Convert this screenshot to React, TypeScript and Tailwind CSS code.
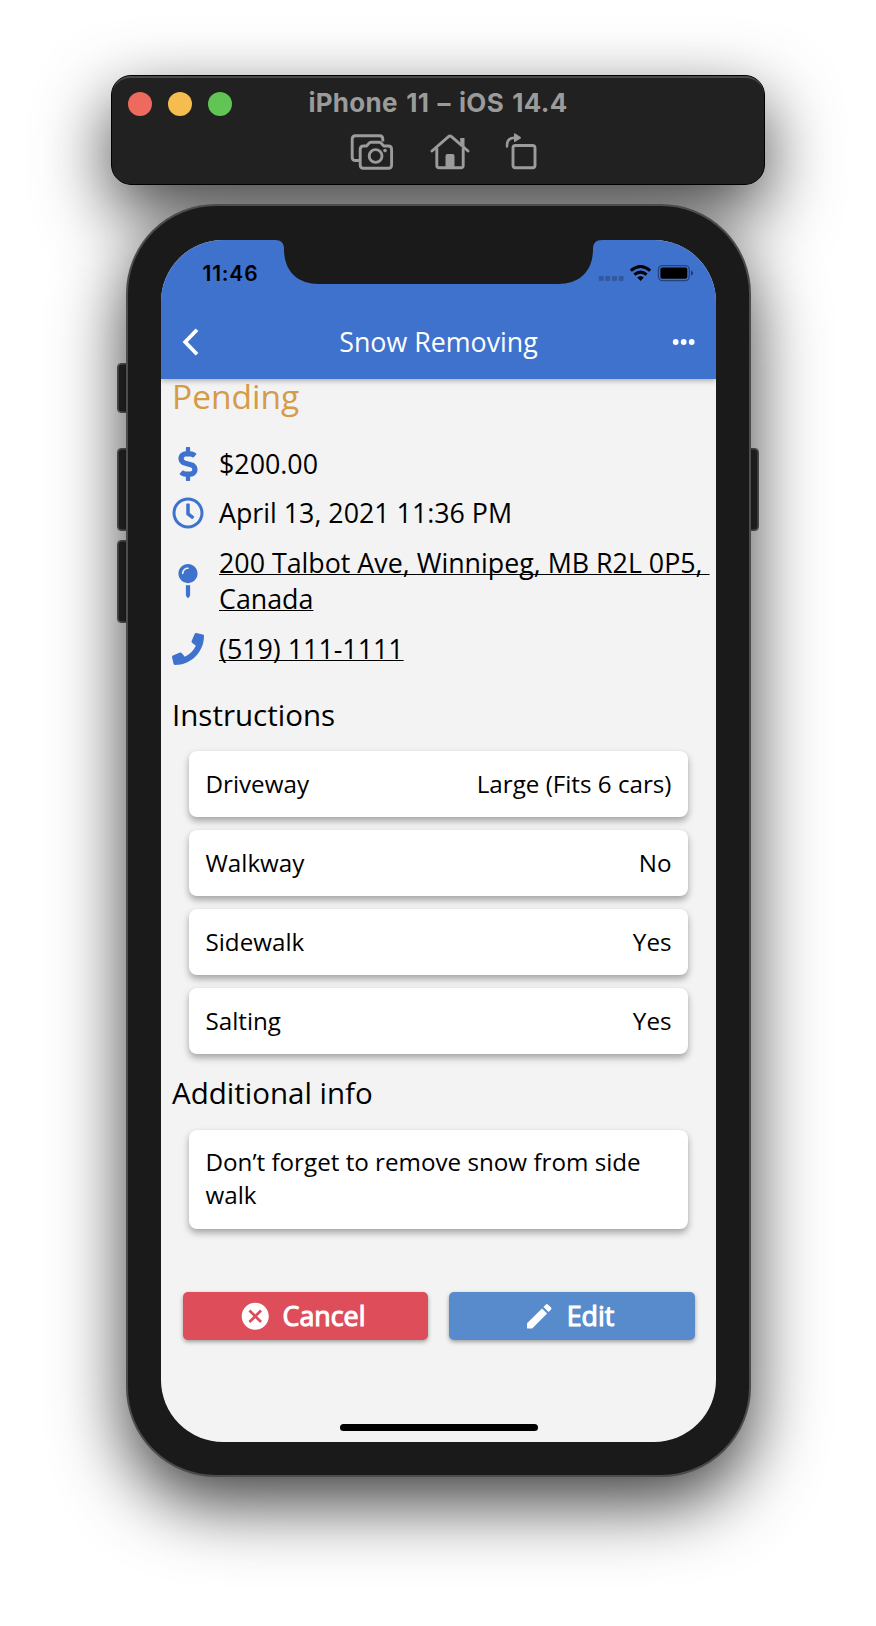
import React from "react";
import type { ReactNode } from "react";
import { FaDollarSign, FaMapPin, FaPhone, FaRegClock } from "react-icons/fa";
import { MdCancel, MdEdit } from "react-icons/md";

const instructions = [
  { label: "Driveway", value: "Large (Fits 6 cars)" },
  { label: "Walkway", value: "No" },
  { label: "Sidewalk", value: "Yes" },
  { label: "Salting", value: "Yes" },
];

function Toolbar() {
  return (
    <div className="relative mx-auto h-[110px] w-[654px]">
      <div className="absolute inset-0 rounded-[20px] shadow-[0_26px_70px_rgba(0,0,0,0.74)]" />
      <div className="relative z-20 h-full rounded-[20px] border border-black bg-[#212121]">
        <div className="absolute inset-0 rounded-[19px] border-t-2 border-[#4a4a4a]" />
        <div className="grid h-[54px] grid-cols-[1fr_auto_1fr] items-center">
          <div className="flex gap-4 pl-4 pt-[2px]">
            <span className="size-6 rounded-full bg-[#ee6a5f]" />
            <span className="size-6 rounded-full bg-[#f5bd4f]" />
            <span className="size-6 rounded-full bg-[#61c454]" />
          </div>
          <div className="font-['Inter',sans-serif] text-[26px] font-bold leading-none tracking-[0.3px] text-[#9b9b9b] [word-spacing:1.8px]">
            iPhone 11 – iOS 14.4
          </div>
        </div>
        <div className="flex pl-[238px] pt-[2px]" aria-hidden="true">
          <svg className="h-[38px] w-[44px]" viewBox="0 0 44 38" fill="none" stroke="#9b9b9b" strokeWidth="2.9" strokeLinejoin="round">
            <path d="M9 28.500H5.500Q2.200 28.500 2.200 25.200V7Q2.200 3.700 5.500 3.700H29.500Q32.800 3.700 32.800 7V9.500" />
            <path d="M10.200 17.500Q10.200 14 13.500 14H16.500L19.300 11Q20.100 10.200 21.300 10.200H29Q30.200 10.200 31 11L33.800 14H38.300Q41.600 14 41.600 17.500V33Q41.600 36.300 38.300 36.300H13.500Q10.200 36.300 10.200 33Z" />
            <circle cx="25.600" cy="24" r="6.400" />
            <circle cx="35" cy="18.600" r="1.800" fill="#9b9b9b" stroke="none" />
          </svg>
          <svg className="ml-[36px] h-[38px] w-[40px]" viewBox="0 0 40 38" fill="none" stroke="#9b9b9b" strokeWidth="2.900" strokeLinejoin="round">
            <path d="M2 19L18.500 4.700Q20 3.400 21.500 4.700L38 19" strokeLinecap="round" />
            <path d="M6.800 16V33.500Q6.800 35.800 9.300 35.800H30.700Q33.200 35.800 33.200 33.500V16" />
            <path d="M15.500 36V24Q15.500 22 17.500 22H22.500Q24.500 22 24.500 24V36Z" fill="#9b9b9b" stroke="none" />
            <path d="M30.200 6H34.500V15L30.200 11Z" fill="#9b9b9b" stroke="none" />
          </svg>
          <svg className="ml-[34.5px] h-[38px] w-[34px]" viewBox="0 0 34 38" fill="none" stroke="#9b9b9b" strokeWidth="2.900">
            <rect x="8" y="13.500" width="22" height="22.300" rx="2.500" />
            <path d="M2 14.500V13.500Q2 5.700 9.500 5.700" strokeWidth="2.400" strokeLinecap="round" />
            <path d="M9 2.200Q9 0.900 10.200 1.600L15.600 5Q16.400 5.700 15.600 6.400L10.200 9.800Q9 10.500 9 9.200Z" fill="#9b9b9b" stroke="none" />
          </svg>
        </div>
      </div>
    </div>
  );
}

function StatusBar() {
  return (
    <div className="relative h-[66px]">
      <svg className="absolute left-[114px] top-0 h-[45px] w-[327px]" viewBox="0 0 327 45" fill="#1a1a1a">
        <path d="M0 0C6 0 9 3 9 9C9 31 22 44 44 44H283C305 44 318 31 318 9C318 3 321 0 327 0Z" />
      </svg>
      <div className="flex items-start justify-between pl-[41.5px] pr-[21px] pt-[22px]">
        <span className="font-['Inter',sans-serif] text-[21px] font-semibold leading-[23px] tracking-[0.8px] text-black">11:46</span>
        <svg className="mt-[2px] h-[20px] w-[97px]" viewBox="0 0 97 20">
          <g fill="#000" fillOpacity="0.22">
            <rect x="0.700" y="12" width="5" height="5" rx="1" />
            <rect x="7.300" y="12" width="5" height="5" rx="1" />
            <rect x="14" y="12" width="5" height="5" rx="1" />
            <rect x="20.700" y="12" width="5" height="5" rx="1" />
          </g>
          <g fill="none" stroke="#000" strokeWidth="3">
            <path d="M32.800 6.600Q42.500 -1.600 52.200 6.600" />
            <path d="M36.400 10.600Q42.500 5.600 48.600 10.600" />
          </g>
          <path d="M39.200 13.600Q42.500 11 45.800 13.600L42.500 17Z" />
          <rect x="60.400" y="1.600" width="30.900" height="15" rx="4" fill="none" stroke="#000" strokeOpacity="0.4" strokeWidth="1.300" />
          <rect x="62.400" y="3.400" width="26.900" height="11.400" rx="2" />
          <path d="M93 6.500Q95.200 7.500 95.200 9.100Q95.200 10.700 93 11.700Z" fillOpacity="0.5" />
        </svg>
      </div>
    </div>
  );
}

function Header() {
  return (
    <header className="relative z-10 h-[139px] shrink-0 bg-[#3f72cd] shadow-[0_2px_5px_rgba(0,0,0,0.28)]">
      <StatusBar />
      <div className="grid h-[72px] grid-cols-[1fr_auto_1fr] items-center px-[21px]">
        <svg className="h-[28px] w-[18px]" viewBox="0 0 18 28" fill="none" stroke="#fff" strokeWidth="3.800">
          <path d="M15 1.800L3.200 14L15 26.200" />
        </svg>
        <h1 className="text-[26.8px] leading-[36px] text-white">Snow Removing</h1>
        <svg className="h-[8px] w-[23px] justify-self-end" viewBox="0 0 23 8" fill="#fff">
          <circle cx="3.700" cy="4" r="2.900" />
          <circle cx="11.700" cy="4" r="2.900" />
          <circle cx="19.700" cy="4" r="2.900" />
        </svg>
      </div>
    </header>
  );
}

function Detail({ icon, children, link = false }: { icon: ReactNode; children: ReactNode; link?: boolean }) {
  return (
    <div className="flex items-center gap-[14px]">
      <span className="flex w-[33px] shrink-0 justify-center pr-px text-[34px] leading-none text-[#3f72cd]">{icon}</span>
      {link ? (
        <a className="whitespace-pre underline decoration-[1.4px] underline-offset-[1px] [text-decoration-skip-ink:none]">{children}</a>
      ) : (
        <span>{children}</span>
      )}
    </div>
  );
}

function Card({ children }: { children: ReactNode }) {
  return (
    <div className="flex justify-between rounded-[8px] bg-white px-[16.5px] pb-[17.2px] pt-[15.6px] text-[24.2px] leading-[33px] shadow-[0_4px_7px_rgba(0,0,0,0.32),0_0_2px_rgba(0,0,0,0.06)]">
      {children}
    </div>
  );
}

function ActionButton({ icon, label, tone }: { icon: ReactNode; label: string; tone: string }) {
  return (
    <button
      className={`flex h-[48px] flex-1 items-center justify-center gap-[11px] rounded-[5px] pr-[6px] text-[26.8px] leading-none text-white shadow-[0_2px_4px_rgba(0,0,0,0.35)] ${tone}`}
    >
      <span className="text-[32.5px]">{icon}</span>
      <span className="[-webkit-text-stroke:1.1px_white]">{label}</span>
    </button>
  );
}

export default function App() {
  return (
    <div className="h-[1626px] w-[876px] overflow-hidden bg-white pt-[75px] font-['Open_Sans',sans-serif] text-black">
      <Toolbar />
      <div className="relative z-10 mx-auto mt-[19px] h-[1273px] w-[625px]">
        <span className="absolute -left-[8px] top-[160px] h-[48px] w-[12px] rounded-[3px] border border-[#555] bg-[#2b2b2b] outline outline-black/60" />
        <span className="absolute -left-[8px] top-[245px] h-[81px] w-[12px] rounded-[3px] border border-[#555] bg-[#2b2b2b] outline outline-black/60" />
        <span className="absolute -left-[8px] top-[337px] h-[81px] w-[12px] rounded-[3px] border border-[#555] bg-[#2b2b2b] outline outline-black/60" />
        <span className="absolute -right-[7px] top-[245px] h-[81px] w-[12px] rounded-[3px] border border-[#555] bg-[#2b2b2b] outline outline-black/60" />
        <div className="relative h-full rounded-[90px] border-2 border-[#4c4c4c] bg-[#1a1a1a] pl-[33.5px] pt-[34px] shadow-[0_26px_70px_rgba(0,0,0,0.76)]">
          <main className="flex h-[1202px] w-[555px] flex-col overflow-hidden rounded-[62px] bg-[#f3f3f3]">
            <Header />
            <section className="pl-[11px]">
              <h2 className="-mt-px text-[33.5px] leading-[36px] text-[#d69b47]">Pending</h2>
              <div className="mt-[31.5px] flex flex-col gap-[13px] text-[26.8px] leading-[36.6px]">
                <Detail icon={<FaDollarSign />}>$200.00</Detail>
                <Detail icon={<FaRegClock />}>April 13, 2021 11:36 PM</Detail>
                <Detail icon={<FaMapPin />} link>
                  {"200 Talbot Ave, Winnipeg, MB R2L 0P5, \nCanada"}
                </Detail>
                <Detail icon={<FaPhone />} link>
                  (519) 111-1111
                </Detail>
              </div>
              <h3 className="mt-[27.6px] text-[29.5px] leading-[40px]">Instructions</h3>
            </section>
            <div className="mt-[16px] flex flex-col gap-[13.3px] px-7">
              {instructions.map(({ label, value }) => (
                <Card key={label}>
                  <span>{label}</span>
                  <span>{value}</span>
                </Card>
              ))}
            </div>
            <h3 className="mt-[18.8px] pl-[11px] text-[29.5px] leading-[40px]">Additional info</h3>
            <div className="mt-[17px] px-7">
              <Card>Don’t forget to remove snow from side walk</Card>
            </div>
            <div className="mt-auto flex gap-[21px] px-[21.5px]">
              <ActionButton icon={<MdCancel />} label="Cancel" tone="bg-[#dd4d5a]" />
              <ActionButton icon={<MdEdit />} label="Edit" tone="bg-[#588bcb]" />
            </div>
            <div className="mx-auto mb-[11px] mt-[84px] h-[7px] w-[198px] shrink-0 rounded-full bg-black" />
          </main>
        </div>
      </div>
    </div>
  );
}
